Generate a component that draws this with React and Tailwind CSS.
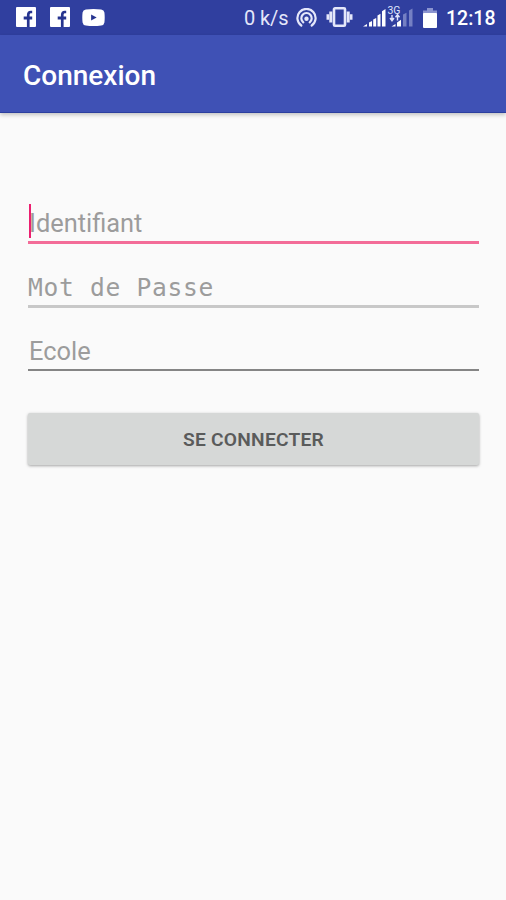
import React, { useState } from "react";

const FacebookIcon = () => (
  <svg width="20" height="20" viewBox="0 0 20 20">
    <rect width="20" height="20" rx="1" fill="#fff" />
    <path
      d="M10.900 20v-7.500H7.700V9.500h3.200V7.900c0-2.700 1.500-4.200 3.800-4.200h1.500v2.500h-1c-1.100 0-1.600.6-1.600 1.700v1.600h2.600v3h-2.600V20z"
      fill="#26348f"
    />
  </svg>
);

const YoutubeIcon = () => (
  <svg width="23" height="17" viewBox="0 0 24 17" preserveAspectRatio="none">
    <path
      d="M4 .6Q12-.4 20 .6q3 .3 3.4 3 .6 4.900 0 9.800-.4 2.700-3.400 3-8 1-16 0-3-.3-3.400-3-.6-4.900 0-9.800.4-2.700 3.400-3z"
      fill="#fff"
    />
    <path d="M9.500 5.500v6l5.800-3z" fill="#26348f" />
  </svg>
);

const HotspotIcon = () => (
  <svg width="21" height="20" viewBox="0 0 21 20" fill="none">
    <g stroke="#e4e7fa" strokeWidth="2.200" strokeLinecap="round">
      <path d="M5.300 17.500a9.100 9.100 0 1 1 10.400 0" />
      <path d="M7.300 14.300a5.200 5.200 0 1 1 6.400 0" />
    </g>
    <circle cx="10.500" cy="10.800" r="2.200" fill="#e4e7fa" />
  </svg>
);

const VibrateIcon = () => (
  <svg width="27" height="20" viewBox="0 0 27 20" fill="none">
    <rect x="8" y="1.300" width="11" height="17.400" rx="1" stroke="#e4e7fa" strokeWidth="2.600" />
    <path d="M4.800 4.500v11M22.200 4.500v11" stroke="#e4e7fa" strokeWidth="3" />
    <path d="M1.800 7.300v5.400M25.200 7.300v5.400" stroke="#e4e7fa" strokeWidth="2.600" />
  </svg>
);

const SignalIcons = () => (
  <svg width="52" height="24" viewBox="0 0 52 24">
    <g fill="#fff">
      <path d="M0 22.500l4-2.500v2.500z" />
      <path d="M6 18.500l3-1.500v5.500H6z" />
      <path d="M10.200 15.500l3-1.500v8.500h-3z" />
      <path d="M14.500 11.500l3-1.700v12.700h-3z" />
      <path d="M19 7.300l3.500-2.300v17.500H19z" />
      <path d="M28.500 22.500l4-2.500v2.500z" />
      <path d="M34 18.500l4-2.800v6.800h-4z" />
    </g>
    <g fill="#7580c3">
      <path d="M40 10.500l3.500-1.800v13.800H40z" />
      <path d="M46 6.500l3.500-2v18H46z" />
    </g>
    <path
      d="M29 11v5.500m-2-2.500l2 2.700 2-2.700M34.500 16.500V11m-2 2.200l2-2.500 2 2.500"
      stroke="#dfe3fa"
      strokeWidth="1.400"
      fill="none"
    />
    <text x="24.500" y="10" fontSize="11" fill="#dfe3fa" textLength="13" lengthAdjust="spacingAndGlyphs">
      3G
    </text>
  </svg>
);

const BatteryIcon = () => (
  <svg width="14" height="20" viewBox="0 0 14 20">
    <path d="M4 0h6v2.500h4V6H0V2.500h4z" fill="#8b94cf" />
    <rect y="5" width="14" height="15" rx="1" fill="#fff" />
  </svg>
);

const StatusBar = () => (
  <div className="flex h-[35px] items-start bg-[#303f9f] text-[#e4e7fa]">
    <div className="flex items-center pl-4 pt-[7px]">
      <FacebookIcon />
      <div className="ml-[14px]">
        <FacebookIcon />
      </div>
      <div className="ml-3">
        <YoutubeIcon />
      </div>
    </div>
    <div className="ml-auto flex pr-[11px]">
      <span className="mr-2 mt-[5px] w-[44px] whitespace-nowrap text-[20px] leading-[26px] tracking-[-0.1px]">
        0 k/s
      </span>
      <div className="mr-[9px] mt-2">
        <HotspotIcon />
      </div>
      <div className="mr-[10px] mt-[7px]">
        <VibrateIcon />
      </div>
      <div className="mr-2 mt-1">
        <SignalIcons />
      </div>
      <div className="mr-[9px] mt-[8px]">
        <BatteryIcon />
      </div>
      <span className="mt-[6px] w-[49px] whitespace-nowrap text-[19.5px] font-medium leading-[26px] text-white">
        12:18
      </span>
    </div>
  </div>
);

const Field = ({ id, label, type = "text", labelClass = "", lineClass, caret }) => {
  const [value, setValue] = useState("");

  return (
    <div className={`relative flex items-start ${lineClass}`}>
      {!value && (
        <label
          htmlFor={id}
          className={`whitespace-nowrap text-[#9c9c9c] ${labelClass}`}
        >
          {label}
        </label>
      )}
      <input
        id={id}
        type={type}
        value={value}
        onChange={(e) => setValue(e.target.value)}
        className="absolute inset-0 bg-transparent text-[26px] text-[#212121] outline-none"
      />
      {caret && !value && (
        <span className="absolute left-px top-[1px] h-[34px] w-[2px] bg-[#ec1f70]" />
      )}
    </div>
  );
};

const App = () => {
  return (
    <div className="min-h-screen bg-[#fafafa] font-['Roboto',sans-serif]">
      <StatusBar />
      <header className="flex h-[78px] items-center border-b border-[#2c3f9f] bg-[#3f51b5] pl-[23px] pt-[5px] shadow-[0_2px_4px_rgba(0,0,0,0.22)]">
        <h1 className="text-[28px] font-medium leading-8 text-white">Connexion</h1>
      </header>

      <form
        onSubmit={(e) => e.preventDefault()}
        className="flex flex-col pl-7 pr-[27px] pt-[90px]"
      >
        <Field
          id="login"
          label="Identifiant"
          labelClass="pl-px text-[25.4px] leading-[40px]"
          lineClass="h-[41px] border-b-3 border-[#f36c98]"
          caret
        />
        <div className="h-[23px]" />
        <Field
          id="password"
          type="password"
          label="Mot de Passe"
          labelClass="font-['DejaVu_Sans_Mono',monospace] text-[24.6px] leading-[41px] tracking-[0.7px]"
          lineClass="h-[41px] border-b-3 border-[#c8c8c8]"
        />
        <div className="h-[23px]" />
        <Field
          id="school"
          label="Ecole"
          labelClass="pl-px text-[25.4px] leading-[40px]"
          lineClass="h-[40px] border-b-2 border-[#858585]"
        />
        <button
          type="submit"
          className="mt-[42px] h-[52px] rounded-[2px] bg-[#d6d8d7] pt-0.5 text-[19.2px] font-semibold tracking-[0.25px] text-[#5a5b5b] shadow-[0_1px_3px_rgba(0,0,0,0.35)]"
        >
          SE CONNECTER
        </button>
      </form>
    </div>
  );
};

export default App;
